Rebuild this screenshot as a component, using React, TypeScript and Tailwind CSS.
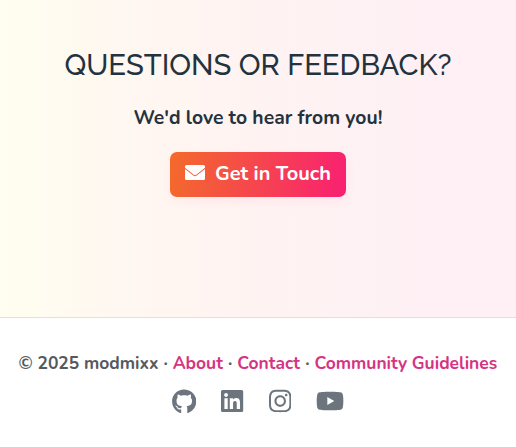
import { FaGithub, FaInstagram, FaLinkedin, FaYoutube } from "react-icons/fa6";

const links = [
  { label: "About", className: "w-[50.5px]" },
  { label: "Contact", className: "w-[63px]" },
  { label: "Community Guidelines", className: "w-[183px]" },
];

function Envelope({ className }: { className: string }) {
  return (
    <svg viewBox="0 0 20 15" className={className} fill="currentColor" aria-hidden="true">
      <path d="M1.5 0h17A1.5 1.5 0 0 1 20 1.5v1.3l-8.8 7a2 2 0 0 1-2.4 0L0 2.8V1.5A1.5 1.5 0 0 1 1.5 0Z" />
      <path d="M0 3.9l8.3 6.6a2.8 2.8 0 0 0 3.4 0L20 3.9v9.6a1.5 1.5 0 0 1-1.5 1.5h-17A1.5 1.5 0 0 1 0 13.5Z" />
    </svg>
  );
}

export default function App() {
  return (
    <div className="flex h-[447px] w-full flex-col overflow-hidden bg-white font-['Nunito','Lato',sans-serif]">
      <section className="flex h-[317px] shrink-0 flex-col items-center bg-[linear-gradient(90deg,#fffef0_0%,#fff7f1_25%,#fff3f2_50%,#fef1f4_75%,#fef0f5_100%)] pt-[47px] text-[#22333f]">
        <h2 className="h-9 whitespace-nowrap font-['Raleway','Lato',sans-serif] text-[29.2px] font-medium leading-9">QUESTIONS OR FEEDBACK?</h2>
        <p className="mt-[21px] h-7 whitespace-nowrap text-[19.35px] font-bold leading-7">We'd love to hear from you!</p>
        <a href="#" className="mt-[20px] flex h-[45px] w-[176px] items-center whitespace-nowrap rounded-[7px] bg-[linear-gradient(100deg,#f36b2b_0%,#f91f72_100%)] pl-[15px] text-[20px] font-bold text-white shadow-[0_4px_12px_rgba(251,31,114,0.06)]">
          <Envelope className="mr-[10px] -mt-[4px] h-[15px] w-5 shrink-0" />
          <span className="-mt-px">Get in Touch</span>
        </a>
      </section>
      <footer className="flex flex-1 flex-col items-center border-t border-[#dee0e4] pt-[31px] text-[17.45px] font-bold text-[#55595e]">
        <nav className="flex h-7 w-[479px] justify-between whitespace-nowrap leading-7">
          <span className="w-[140px]">© 2025 modmixx</span>
          {links.map((link) => (
            <span key={link.label} className="contents">
              <span>·</span>
              <a href="#" className={`text-[#d63384] ${link.className}`}>{link.label}</a>
            </span>
          ))}
        </nav>
        <div className="mt-[11px] flex items-center gap-[25px] text-[#6c757d]">
          <FaGithub className="h-[25px] w-[24.4px]" />
          <FaLinkedin className="h-[26px] w-[22.2px]" />
          <FaInstagram className="h-[26px] w-[22.4px]" />
          <FaYoutube className="h-[26px] w-[28.1px]" />
        </div>
      </footer>
    </div>
  );
}
